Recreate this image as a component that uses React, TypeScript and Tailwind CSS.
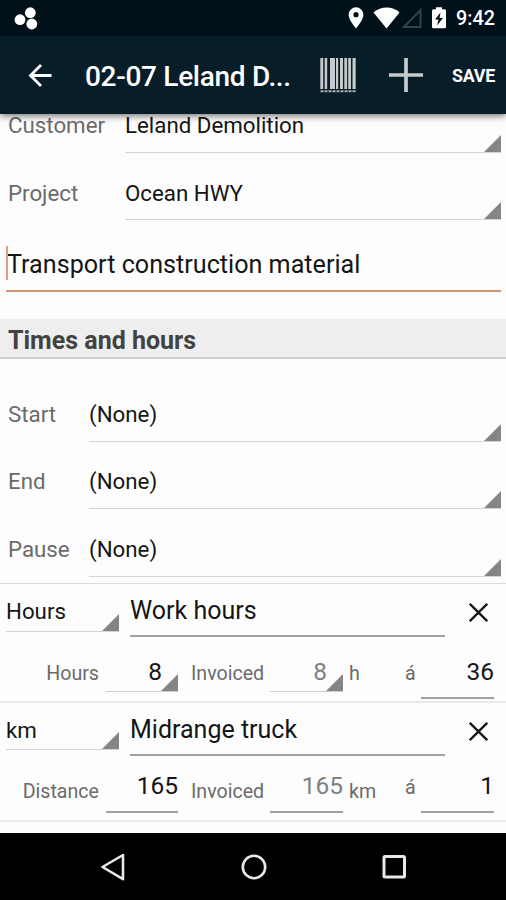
import React from "react";
import clsx from "clsx";

interface SelectRowProps {
  label: string;
  value: string;
  labelClass: string;
  valueClass: string;
  className?: string;
}

interface LineItem {
  unit: string;
  name: string;
  quantityLabel: string;
  quantity: string;
  suffix: string;
  price: string;
  hasPicker: boolean;
}

const ITEMS: LineItem[] = [
  {
    unit: "Hours",
    name: "Work hours",
    quantityLabel: "Hours",
    quantity: "8",
    suffix: "h",
    price: "36",
    hasPicker: true,
  },
  {
    unit: "km",
    name: "Midrange truck",
    quantityLabel: "Distance",
    quantity: "165",
    suffix: "km",
    price: "1",
    hasPicker: false,
  },
];

// x offset and width of every bar in the barcode icon
const BARS = [
  [0.3, 2.9],
  [4.7, 2.5],
  [10, 5],
  [16, 2.2],
  [20, 3],
  [24.3, 2.8],
  [28.2, 2.8],
  [32.5, 3.2],
];

function Corner() {
  return (
    <svg className="absolute right-0 bottom-0 h-[17px] w-[17px]" viewBox="0 0 17 17">
      <path d="M17 0V17H0Z" fill="#858585" />
    </svg>
  );
}

function StatusBar() {
  return (
    <div className="flex h-9 items-center bg-[#01111a] pr-[11px] pl-[14px] text-white">
      <svg className="h-6 w-6" viewBox="0 0 24 24" fill="currentColor">
        <circle cx="6" cy="13.7" r="5.4" />
        <circle cx="16.3" cy="6.7" r="5.4" />
        <circle cx="17.8" cy="18" r="5.4" />
      </svg>
      <svg className="ml-auto h-6 w-[100px]" viewBox="0 0 100 24" fill="currentColor">
        <path
          fillRule="evenodd"
          d="M8 1.3a7.4 7.4 0 0 0-7.4 7.4C.6 14 8 22.4 8 22.4s7.4-8.4 7.4-13.7A7.4 7.4 0 0 0 8 1.3Zm0 4.8a2.6 2.6 0 1 1 0 5.2 2.6 2.6 0 0 1 0-5.2Z"
        />
        <path d="M25.5 6.4C33-.2 44.5-.2 51.5 6.4L38.5 22.4Z" />
        <path d="M72.5 4V21H56Z" fill="none" stroke="#33434c" strokeWidth="2" />
        <path
          fillRule="evenodd"
          d="M88 1.3h6v2h2.5q1.5 0 1.5 1.5v16q0 1.5-1.5 1.5h-11q-1.5 0-1.5-1.5v-16q0-1.5 1.5-1.5H88ZM92.5 6.5l-5.5 7h3.5L89 19.5l6-7.500h-3.500Z"
        />
      </svg>
      <span className="ml-[8px] pt-px text-[19.800px] leading-6 font-medium">9:42</span>
    </div>
  );
}

function AppBar() {
  return (
    <div className="relative z-10 flex h-[78px] items-center bg-[#071d27] pr-[11px] pl-7 text-white shadow-[0_2px_7px_rgba(0,0,0,0.55)]">
      <svg className="h-[24px] w-[24px] shrink-0" viewBox="0 0 24 24" fill="none" stroke="currentColor" strokeWidth="2.8">
        <path d="M23.5 12.500H3M13 2 2.500 12.500 13 23" />
      </svg>
      <h1 className="ml-[33px] w-[208px] shrink-0 pt-[3px] text-[28px] leading-8 font-medium tracking-[-0.3px] whitespace-nowrap">
        02-07 Leland D...
      </h1>
      <svg className="ml-[27px] h-[35px] w-9 shrink-0" viewBox="0 0 36 35" fill="#c5cacc">
        {BARS.map(([x, w]) => (
          <rect key={x} x={x} y="0" width={w} height="31" />
        ))}
        <path d="M.5 33.200H35.500" stroke="#aab0b3" strokeWidth="2" strokeDasharray="3 1" />
      </svg>
      <svg className="ml-[33px] h-[34px] w-[34px] shrink-0" viewBox="0 0 34 34" stroke="#c5cacc" strokeWidth="3.700">
        <path d="M0 17H34M17 0V34" />
      </svg>
      <span className="ml-auto pt-px text-[17.800px] leading-6 font-bold tracking-[-0.2px]">SAVE</span>
    </div>
  );
}

function SelectRow({ label, value, labelClass, valueClass, className }: SelectRowProps) {
  return (
    <div className={clsx("flex items-end pr-[5px] pl-2 text-[22.300px] leading-6", className)}>
      <span className={clsx("shrink-0 text-[#6b6b6b]", labelClass)}>{label}</span>
      <div className={clsx("relative flex-1 border-b border-[#d4d4d4] text-[#151515]", valueClass)}>
        {value}
        <Corner />
      </div>
    </div>
  );
}

interface NumberFieldProps {
  value: string;
  picker?: boolean;
  muted?: boolean;
}

function NumberField({ value, picker, muted }: NumberFieldProps) {
  return (
    <div
      className={clsx(
        "relative text-right text-[24.500px] leading-7",
        picker ? "h-[34px] border-b border-[#cfcfcf] pr-[16px]" : "h-[41px] border-b-2 border-[#a0a0a0]",
        muted ? "text-[#808080]" : "text-[#151515]",
      )}
    >
      {value}
      {picker && <Corner />}
    </div>
  );
}

function ItemBlock({ item }: { item: LineItem }) {
  const labelPad = item.hasPicker ? "pt-[2px]" : "pt-[6px]";

  return (
    <div className="h-[119px] border-b-2 border-[#eaeaea]">
      <div className="flex h-[53px] items-start pt-[13px] pl-[6px]">
        <div
          className={clsx(
            "relative w-[113px] border-b border-[#d4d4d4] text-[22.300px] leading-7 text-[#151515]",
            item.hasPicker ? "h-[35px]" : "h-[34px]",
          )}
        >
          {item.unit}
          <Corner />
        </div>
        <div className="ml-[11px] h-[40px] w-[315px] border-b-2 border-[#a0a0a0] text-[25px] leading-7 text-[#151515]">
          {item.name}
        </div>
        <svg className="mt-[6px] ml-[24px] h-[19px] w-[19px]" viewBox="0 0 19 19" stroke="#151515" strokeWidth="2.300">
          <path d="M.8.8 18.200 18.200M18.200.8.8 18.200" />
        </svg>
      </div>
      <div
        className={clsx(
          "grid grid-cols-[99px_72px_73px_73px_73px_73px] text-[19.600px] leading-7 text-[#6b6b6b]",
          item.hasPicker ? "pt-[21px]" : "pt-[16px]",
        )}
      >
        <span className={clsx("text-right", labelPad)}>{item.quantityLabel}</span>
        <div className="ml-[7px] -mr-[7px]">
          <NumberField value={item.quantity} picker={item.hasPicker} />
        </div>
        <span className={clsx("pl-5", labelPad)}>Invoiced</span>
        <div className="ml-[26px] -mr-[26px]">
          <NumberField value={item.quantity} picker={item.hasPicker} muted />
        </div>
        <div className={clsx("flex pl-8", labelPad)}>
          <span className="w-[56px] shrink-0">{item.suffix}</span>
          <span className={clsx(!item.hasPicker && "-mt-1")}>á</span>
        </div>
        <div className="ml-[31px] -mr-[31px]">
          <NumberField value={item.price} />
        </div>
      </div>
    </div>
  );
}

function NavBar() {
  return (
    <div className="h-[67px] bg-black">
      <div className="flex h-full items-center justify-between pr-[98px] pl-[101px]">
        <svg className="h-7 w-6" viewBox="0 0 24 28" fill="none" stroke="#e8e8e8" strokeWidth="2.6" strokeLinejoin="round">
          <path d="M22 2V26.200L1.500 14Z" />
        </svg>
        <svg className="h-7 w-7" viewBox="0 0 28 28" fill="none" stroke="#e8e8e8" strokeWidth="2.6">
          <circle cx="15" cy="14" r="11.200" />
        </svg>
        <svg className="h-7 w-7" viewBox="0 0 28 28" fill="none" stroke="#e8e8e8" strokeWidth="3">
          <rect x="4" y="3.500" width="20.500" height="20.500" rx="1" />
        </svg>
      </div>
    </div>
  );
}

export default function App() {
  return (
    <div className="flex h-[900px] w-[506px] flex-col overflow-hidden bg-[#fdfdfd] font-[Roboto,sans-serif]">
      <StatusBar />
      <AppBar />

      <div className="h-[719px] shrink-0 overflow-hidden">
        <SelectRow
          label="Customer"
          value="Leland Demolition"
          labelClass="w-[117px] pb-[16px]"
          valueClass="pb-[15px]"
          className="h-[39px]"
        />
        <SelectRow
          label="Project"
          value="Ocean HWY"
          labelClass="w-[117px] pb-[15px]"
          valueClass="pb-[14px]"
          className="h-[67px]"
        />

        {/* Description input with the text cursor at its start */}
        <div className="relative mx-[6px] mr-[5px] h-[72px] border-b-2 border-[#d3956c] pt-[31px] pl-px text-[25.150px] leading-7 text-[#151515]">
          <span className="absolute top-[26px] left-0 h-[34px] w-[2px] bg-[#e39c78]" />
          Transport construction material
        </div>

        <h2 className="mt-[27px] h-10 border-b-2 border-[#d0d0d0] bg-[#eeeeee] pl-2 text-[25px] leading-[43px] font-bold text-[#424242]">
          Times and hours
        </h2>

        <SelectRow label="Start" value="(None)" labelClass="w-[81px] pb-[16px]" valueClass="pb-[15px]" className="h-[83px]" />
        <SelectRow label="End" value="(None)" labelClass="w-[81px] pb-[16px]" valueClass="pb-[15px]" className="h-[67px]" />
        <SelectRow label="Pause" value="(None)" labelClass="w-[81px] pb-[16px]" valueClass="pb-[15px]" className="h-[68px]" />

        <div className="mt-[6px] border-t border-[#dcdcdc]">
          {ITEMS.map((item) => (
            <ItemBlock key={item.name} item={item} />
          ))}
        </div>
      </div>

      <NavBar />
    </div>
  );
}
